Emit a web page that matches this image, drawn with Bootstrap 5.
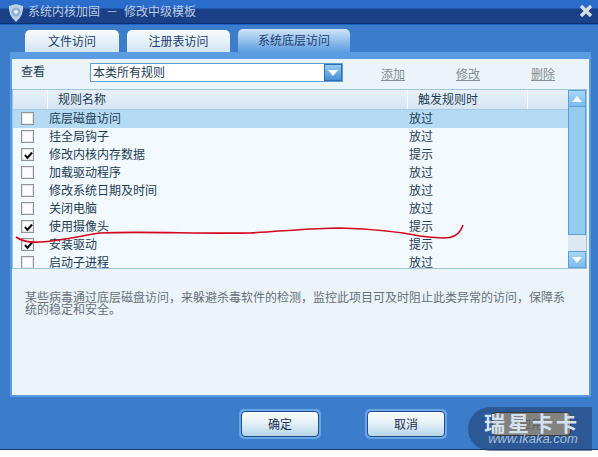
<!DOCTYPE html>
<html lang="zh-CN">
<head>
    <meta charset="UTF-8">
    <meta name="viewport" content="width=device-width, initial-scale=1.0">
    <title>系统内核加固</title>
    <link href="https://cdn.jsdelivr.net/npm/bootstrap@5.3.0/dist/css/bootstrap.min.css" rel="stylesheet">
    <style>
        html, body { height: 457px; overflow: hidden; background: #fff; }
        body { font: 12px/18px "Noto Sans CJK SC", "Liberation Sans", sans-serif; color: #1d3d55; }
        .dlg { position: relative; width: 598px; height: 450px; background: #3c7dcb; border-bottom: 1px solid #123a68; }
        .titlebar { height: 25px; padding: 0 5px 0 8px; color: #b9cde8; font-size: 12px; background: linear-gradient(#2a6ecb 0, #2a6ccb 8px, #1a4187 9px, #1a4187 23px, #0b2f73 23px, #0b2f73 24px, #1c63c8 24px); }
        .title-txt { line-height: 21px; }
        .title-dash { margin: 0 6px; }
        .dlg-tabs { height: 27px; padding: 5px 0 0 25px; gap: 8px; }
        .tab-item { width: 94px; height: 22px; text-align: center; line-height: 21px; color: #1d3d70; border-radius: 5px 5px 0 0; background: linear-gradient(#f7fbfd, #d3e5f1); }
        .tab-item.w2 { width: 103px; }
        .tab-item.on { width: 112px; margin-top: -1px; height: 23px; background: linear-gradient(#cfe5f6, #5b9ce0); }
        .frame { margin: 0 7px 0 10px; height: 345px; background: #eaf4f9; border: solid #5a9be1; border-width: 7px 2px 2px 2px; }
        .toolrow { height: 30px; padding: 4px 0 0 9px; }
        .view-lbl { width: 69px; line-height: 16px; }
        .combo { width: 253px; height: 19px; background: #fff; border: 1px solid #5b9ed6; padding-left: 2px; line-height: 15px; }
        .combo-btn { width: 18px; height: 17px; background: linear-gradient(#9fd0f3, #3f8dd6); box-shadow: 0 0 0 1px #2f6fb0 inset; }
        .tool-link { color: #858d92; text-decoration: underline; }
        .links-box { padding: 2px 0 0 38px; gap: 51px; }
        .grid-box { height: 180px; width: 575px; border: 1px solid #9cc5dc; overflow: hidden; background: #f2f9ff; }
        .grid-main { width: 556px; }
        .grid-head { height: 20px; background: linear-gradient(#e7f0f8, #d6e5f2); border-bottom: 1px solid #a4cbe7; }
        .hc { border-right: 1px solid #fff; line-height: 18px; height: 19px; }
        .hc1 { width: 35px; }
        .hc2 { width: 360px; padding-left: 10px; }
        .hc3 { width: 120px; padding-left: 10px; }
        .grid-row { height: 18px; line-height: 16px; }
        .grid-row.sel { background: #b5daf3; }
        .chk-cell { width: 36px; padding: 2px 0 0 8px; }
        .chk { display: block; width: 13px; height: 13px; background: #fbfcfc; border: 1px solid #8f9498; box-shadow: inset 0 0 0 1px #e6e6e6; }
        .chk svg { display: block; margin: 2px 0 0 2px; }
        .nm { width: 360px; }
        .vscroll { width: 18px; background: #dce8f2; }
        .sb-btn { height: 17px; background: linear-gradient(#a5d6f6, #7dbcec); border: 1px solid #5d9fd8; }
        .sb-thumb { height: 128px; background: #93ccee; border: 1px solid #5d9fd8; border-top: 0; }
        .sb-gap { height: 16px; }
        .desc { padding: 22px 0 0 13px; color: #68717a; line-height: 12px; width: 553px; }
        .foot { padding: 12px 0 0 239px; gap: 44px; }
        .dlg-btn { width: 82px; height: 30px; padding: 2px; background: #6aa5e6; border-radius: 5px; }
        .dlg-btn .btn { display: block; width: 100%; height: 100%; padding: 0; font-size: 12px; line-height: 22px; color: #1b2f55; border: 1px solid #214f8d; border-radius: 4px; background: linear-gradient(#f8fbfd, #e6f1f8 45%, #b5d5e8); }
        .wm { position: absolute; left: 468px; top: 407px; width: 124px; height: 44px; background: rgba(35, 68, 118, .62); border-radius: 22px 0 0 22px; text-align: center; }
        .wm-a { font-weight: 700; font-size: 21px; line-height: 22px; padding: 4px 0 0 4px; letter-spacing: 3px; color: #d6e1ee; height: 26px; white-space: nowrap; }
        .wm-b { font: italic 13px/12px "Liberation Sans", sans-serif; color: #a9bfd8; padding-left: 6px; }
        .wm-apply { position: absolute; left: 24px; top: 5px; width: 79px; height: 24px; line-height: 22px; color: #5f5f5f; background: rgba(140, 135, 125, .9); border: 1px solid #3b3b3b; border-radius: 4px; }
        .scribble { position: absolute; left: 0; top: 0; pointer-events: none; }
    </style>
</head>
<body class="m-0">
    <div class="dlg">
        <div class="titlebar d-flex align-items-start">
            <svg width="16" height="18" viewBox="0 0 16 18" class="mt-1 me-1">
                <path d="M8 0 L15 2 Q16 11 8 18 Q0 11 1 2 Z" fill="#b9cfe4"/>
                <circle cx="8" cy="8" r="4.5" fill="#8fb0d0"/>
                <circle cx="8" cy="8" r="2" fill="#e6eef6"/>
            </svg>
            <span class="title-txt flex-grow-1">系统内核加固<span class="title-dash">－</span>修改中级模板</span>
            <svg width="14" height="14" viewBox="0 0 14 14" class="mt-1"><path d="M2 2 L12 12 M12 2 L2 12" stroke="#d4dce6" stroke-width="3.4"/></svg>
        </div>

        <div class="dlg-tabs d-flex">
            <div class="tab-item">文件访问</div>
            <div class="tab-item w2">注册表访问</div>
            <div class="tab-item on">系统底层访问</div>
        </div>

        <div class="frame">
            <div class="toolrow d-flex">
                <div class="view-lbl">查看</div>
                <div class="combo d-flex justify-content-between">
                    <span>本类所有规则</span>
                    <span class="combo-btn d-flex align-items-center justify-content-center">
                        <svg width="10" height="6"><path d="M0 0 H10 L5 6 Z" fill="#fff"/></svg>
                    </span>
                </div>
                <div class="links-box d-flex">
                    <span class="tool-link">添加</span>
                    <span class="tool-link">修改</span>
                    <span class="tool-link">删除</span>
                </div>
            </div>

            <div class="grid-box d-flex">
                <div class="grid-main">
                    <div class="grid-head d-flex">
                        <div class="hc hc1"></div>
                        <div class="hc hc2">规则名称</div>
                        <div class="hc hc3">触发规则时</div>
                    </div>
                    <div id="rows"></div>
                </div>
                <div class="vscroll">
                    <div class="sb-btn d-flex align-items-center justify-content-center"><svg width="10" height="6"><path d="M0 6 H10 L5 0 Z" fill="#fff"/></svg></div>
                    <div class="sb-thumb"></div>
                    <div class="sb-gap"></div>
                    <div class="sb-btn d-flex align-items-center justify-content-center"><svg width="10" height="6"><path d="M0 0 H10 L5 6 Z" fill="#fff"/></svg></div>
                </div>
            </div>

            <div class="desc">某些病毒通过底层磁盘访问，来躲避杀毒软件的检测，监控此项目可及时阻止此类异常的访问，保障系统的稳定和安全。</div>
        </div>

        <div class="foot d-flex">
            <div class="dlg-btn"><button class="btn" type="button">确定</button></div>
            <div class="dlg-btn"><button class="btn" type="button">取消</button></div>
        </div>

        <div class="wm">
            <div class="wm-apply">应用</div>
            <div class="wm-a position-relative">瑞星卡卡</div>
            <div class="wm-b position-relative">www.ikaka.com</div>
        </div>

        <svg class="scribble" width="598" height="457" fill="none">
            <path d="M16 237 Q24 243 40 242 C60 241 80 236 100 233 C140 231 200 234 250 233 C285 231 315 228 340 228 C370 229 400 232 420 236 C445 239 458 241 463 225" stroke="#d3061c" stroke-width="1.6"/>
        </svg>
    </div>

    <script>
        const rules = [
            ["底层磁盘访问", "放过", 0],
            ["挂全局钩子", "放过", 0],
            ["修改内核内存数据", "提示", 1],
            ["加载驱动程序", "放过", 0],
            ["修改系统日期及时间", "放过", 0],
            ["关闭电脑", "放过", 0],
            ["使用摄像头", "提示", 1],
            ["安装驱动", "提示", 1],
            ["启动子进程", "放过", 0]
        ];
        const tick = '<svg width="9" height="9"><path d="M1 4 L3.5 7 L8 1.5" fill="none" stroke="#111" stroke-width="2"/></svg>';
        document.getElementById("rows").innerHTML = rules.map((r, i) => `
            <div class="grid-row d-flex${i === 0 ? " sel" : ""}">
                <div class="chk-cell"><span class="chk">${r[2] ? tick : ""}</span></div>
                <div class="nm">${r[0]}</div>
                <div>${r[1]}</div>
            </div>`).join("");
    </script>
    <script src="https://cdn.jsdelivr.net/npm/bootstrap@5.3.0/dist/js/bootstrap.bundle.min.js"></script>
</body>
</html>
